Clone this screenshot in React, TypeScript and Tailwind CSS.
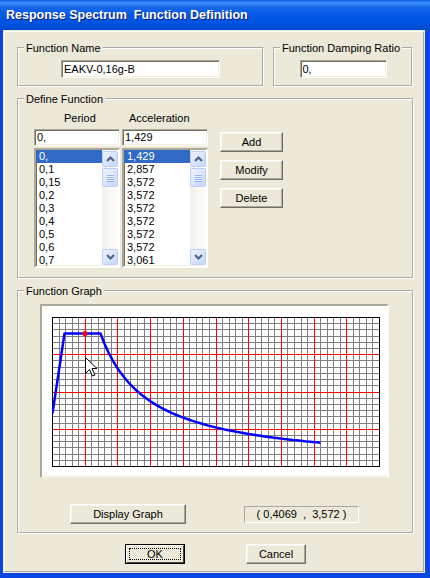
import React from 'react'

const PERIODS = ['0,', '0,1', '0,15', '0,2', '0,3', '0,4', '0,5', '0,6', '0,7']
const ACCELS = ['1,429', '2,857', '3,572', '3,572', '3,572', '3,572', '3,572', '3,572', '3,061']

const sunken =
  'border border-t-[#aca899] border-l-[#aca899] border-r-white border-b-white shadow-[inset_1px_1px_0_#716f64,inset_-1px_-1px_0_#f1efe2]'
const raised =
  'border border-t-white border-l-white border-r-[#716f64] border-b-[#716f64] shadow-[inset_-1px_-1px_0_#aca899,inset_1px_1px_0_#f5f4ea] bg-[#ece9d8]'

function GroupBox({
  label,
  className,
  children
}: {
  label: string
  className?: string
  children: React.ReactNode
}): React.JSX.Element {
  return (
    <fieldset className={`min-w-0 border-2 border-white [border-style:groove] ${className ?? ''}`}>
      <legend className="ml-[5px] px-[2px] leading-[14px]">{label}</legend>
      {children}
    </fieldset>
  )
}

function Button({ label, className }: { label: string; className?: string }): React.JSX.Element {
  return (
    <button className={`flex h-[20px] items-center justify-center ${raised} ${className ?? ''}`}>
      {label}
    </button>
  )
}

function ScrollArrow({ up }: { up?: boolean }): React.JSX.Element {
  return (
    <div className="flex h-[16px] w-[16px] items-center justify-center rounded-[2px] border border-[#bccdf8] bg-[linear-gradient(135deg,#eef3fe,#c6d6fb)]">
      <svg width="9" height="6" viewBox="0 0 9 6">
        <polyline
          points={up ? '1,5 4.5,1.5 8,5' : '1,1 4.5,4.5 8,1'}
          fill="none"
          stroke="#4d6185"
          strokeWidth="2"
        />
      </svg>
    </div>
  )
}

function ScrollBar(): React.JSX.Element {
  return (
    <div className="flex w-[16px] flex-col bg-[linear-gradient(90deg,#f3f1ec,#fefefb)] py-[1px]">
      <ScrollArrow up />
      <div className="mt-[1px] flex h-[19px] w-[16px] flex-col items-center justify-center gap-[1px] rounded-[2px] border border-[#bccdf8] bg-[linear-gradient(135deg,#eef3fe,#c6d6fb)]">
        <div className="h-[1px] w-[7px] bg-[#eef3fe] shadow-[0_1px_0_#8cb0f8]" />
        <div className="h-[1px] w-[7px] bg-[#eef3fe] shadow-[0_1px_0_#8cb0f8]" />
        <div className="h-[1px] w-[7px] bg-[#eef3fe] shadow-[0_1px_0_#8cb0f8]" />
        <div className="h-[1px] w-[7px] bg-[#eef3fe] shadow-[0_1px_0_#8cb0f8]" />
      </div>
      <div className="flex-1" />
      <ScrollArrow />
    </div>
  )
}

function ListBox({ items, className }: { items: string[]; className?: string }): React.JSX.Element {
  return (
    <div className={`flex h-[120px] bg-white ${sunken} border-2 ${className ?? ''}`}>
      <div className="flex-1 overflow-hidden">
        {items.map((it, i) => (
          <div
            key={i}
            className={`h-[13px] pl-[3px] leading-[13px] ${i === 0 ? 'bg-[#316ac5] text-white' : ''}`}
          >
            {it}
          </div>
        ))}
      </div>
      <ScrollBar />
    </div>
  )
}

function Graph(): React.JSX.Element {
  const W = 327
  const H = 149
  const xs = Array.from({ length: 51 }, (_, i) => Math.round((i * W) / 50) + 0.5)
  const ys = Array.from({ length: 25 }, (_, j) => Math.round((j * H) / 24) + 0.5)

  const pts: [number, number][] = [
    [0, 1.429],
    [0.1, 2.857],
    [0.15, 3.572],
    [0.6, 3.572]
  ]
  for (let t = 0.65; t <= 3.36; t += 0.05) pts.push([t, (3.572 * 0.6) / t])
  const path = pts.map(([t, a]) => `${(80 * t + 0.5).toFixed(1)},${(H + 0.5 - 37.25 * a).toFixed(1)}`).join(' ')

  return (
    <svg width={W + 2} height={H + 2} className="block">
      <rect x="0" y="0" width={W + 1} height={H + 1} fill="white" />
      <g shapeRendering="crispEdges" strokeWidth="1">
        {xs.map((x, i) => (
          <line key={`v${i}`} x1={x} y1={0} x2={x} y2={H} stroke="#808080" />
        ))}
        {ys.map((y, j) => (
          <line key={`h${j}`} x1={0} y1={y} x2={W} y2={y} stroke="#808080" />
        ))}
        {xs.map((x, i) =>
          i % 5 === 0 && i > 0 && i < 50 ? <line key={`rv${i}`} x1={x} y1={0} x2={x} y2={H} stroke="#ff0000" /> : null
        )}
        {ys.map((y, j) =>
          j % 6 === 0 && j > 0 && j < 24 ? <line key={`rh${j}`} x1={0} y1={y} x2={W} y2={y} stroke="#ff0000" /> : null
        )}
        <rect x="0.5" y="0.5" width={W} height={H} fill="none" stroke="#000" />
      </g>
      <polyline points={path} fill="none" stroke="#0000ff" strokeWidth="2.5" strokeLinejoin="round" />
      <circle cx="33" cy="16.5" r="2.6" fill="#ff0000" />
      <path
        d="M33.5,40.5 V56.5 L37.5,52.5 L40.5,59 L43,58 L40,51.5 H45 Z"
        fill="white"
        stroke="black"
        strokeWidth="1"
        strokeLinejoin="miter"
      />
    </svg>
  )
}

export default function App(): React.JSX.Element {
  return (
    <div className="flex h-[578px] w-[430px] flex-col bg-[#0a46df] font-['Liberation_Sans',Arial,sans-serif] text-[11px] leading-[13px] text-black">
      <div className="flex h-[30px] shrink-0 items-center bg-[linear-gradient(to_bottom,#0a5fe8_0%,#3d8ef7_10%,#1467eb_25%,#0558e6_50%,#0053e1_80%,#0048cf_100%)] pl-[6px]">
        <span className="whitespace-pre text-[12.5px] font-bold text-white [text-shadow:1px_1px_0_#0f1f6b]">
          Response Spectrum  Function Definition
        </span>
      </div>

      <div className="mb-[5px] ml-[3px] mr-[5px] flex-1 bg-[#ece9d8] p-[1px]">
        <div className="h-full border border-t-white border-l-white border-r-[#aca899] border-b-[#aca899] pl-[12px] pr-[9px]">
          {/* name + damping */}
          <div className="mt-[9px] flex gap-[9px]">
            <GroupBox label="Function Name" className="w-[247px] pb-[7px]">
              <div className="mt-[5px] flex justify-center">
                <div className={`h-[18px] w-[159px] bg-white pl-[2px] leading-[16px] ${sunken}`}>EAKV-0,16g-B</div>
              </div>
            </GroupBox>
            <GroupBox label="Function Damping Ratio" className="w-[140px] pb-[7px]">
              <div className="mt-[5px] flex justify-center">
                <div className={`h-[18px] w-[87px] bg-white pl-[2px] leading-[16px] ${sunken}`}>0,</div>
              </div>
            </GroupBox>
          </div>

          {/* define function */}
          <GroupBox label="Define Function" className="mt-[5px] pb-[9px]">
            <div className="flex pl-[15px]">
              <div className="flex w-[86px] flex-col">
                <div className="mt-[6px] h-[13px] pl-[30px]">Period</div>
                <div className={`mt-[4px] h-[17px] bg-white pl-[2px] leading-[15px] ${sunken}`}>0,</div>
                <ListBox items={PERIODS} className="mt-[2px]" />
              </div>
              <div className="ml-[2px] flex w-[86px] flex-col">
                <div className="mt-[6px] h-[13px] pl-[7px]">Acceleration</div>
                <div className={`mt-[4px] h-[17px] bg-white pl-[2px] leading-[15px] ${sunken}`}>1,429</div>
                <ListBox items={ACCELS} className="mt-[2px]" />
              </div>
              <div className="ml-[12px] mt-[26px] flex w-[63px] flex-col gap-[8px]">
                <Button label="Add" />
                <Button label="Modify" />
                <Button label="Delete" />
              </div>
            </div>
          </GroupBox>

          {/* graph */}
          <GroupBox label="Function Graph" className="mt-[5px] pb-[8px]">
            <div
              className={`ml-[21px] mt-[6px] h-[174px] w-[349px] border-2 border-t-[#aca899] border-l-[#aca899] border-r-white border-b-[#f1efe2] bg-white pl-[10px] pt-[11px]`}
            >
              <Graph />
            </div>
            <div className="mt-[26px] flex items-center">
              <Button label="Display Graph" className="ml-[51px] w-[116px]" />
              <div className="ml-[58px] flex h-[17px] w-[115px] items-center justify-center whitespace-pre border border-t-[#aca899] border-l-[#aca899] border-r-white border-b-white">
                ( 0,4069  ,  3,572 )
              </div>
            </div>
          </GroupBox>

          {/* bottom buttons */}
          <div className="mt-[10px] flex gap-[61px] pl-[108px]">
            <button className="h-[20px] w-[60px] border border-black bg-[#ece9d8]">
              <div className="h-full border border-t-white border-l-white border-r-[#404040] border-b-[#404040] p-[2px]">
                <div className="flex h-full items-center justify-center border border-dotted border-black leading-[12px]">
                  OK
                </div>
              </div>
            </button>
            <Button label="Cancel" className="w-[60px]" />
          </div>
        </div>
      </div>
    </div>
  )
}
